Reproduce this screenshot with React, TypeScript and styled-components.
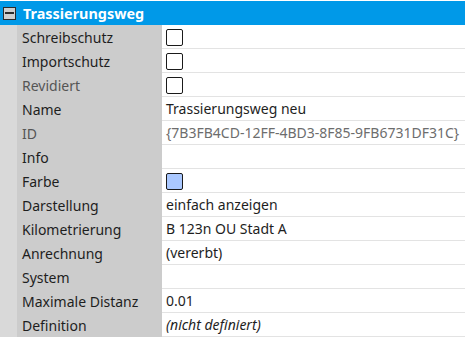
import { FC } from 'react';
import styled, { createGlobalStyle } from 'styled-components';

const GlobalStyle = createGlobalStyle`
  html, body {
    margin: 0;
    padding: 0;
    background: #ffffff;
    font-family: 'Noto Sans', 'Open Sans', sans-serif;
  }
`;

const Grid = styled.div`
  width: 465px;
  height: 337px;
  overflow: hidden;
  padding-top: 1px;
  box-sizing: border-box;
  background: #ffffff;
`;

const Header = styled.div`
  height: 24px;
  display: flex;
  align-items: center;
  background: #0099e8;
  color: #ffffff;
  font-weight: 700;
  font-size: 14.4px;
`;

const Toggle = styled.div`
  width: 11px;
  height: 11px;
  margin: 0 7px 0 3px;
  border: 1px solid #2b2b2b;
  background: #cfcfcf;
  display: flex;
  align-items: center;
  justify-content: center;

  &::after {
    content: '';
    width: 9px;
    height: 2px;
    background: #2b2b2b;
  }
`;

const Row = styled.div`
  display: grid;
  grid-template-columns: 17px 145px 1fr;
  height: 24px;
`;

const Gutter = styled.div`
  background: #d9d9d9;
`;

const Label = styled.div<{ $muted?: boolean }>`
  background: #cccccc;
  display: flex;
  align-items: center;
  padding-left: 5px;
  font-size: 14px;
  color: ${({ $muted }) => ($muted ? '#555555' : '#1e1e1e')};
  white-space: nowrap;
`;

const Value = styled.div<{ $muted?: boolean; $italic?: boolean }>`
  display: flex;
  align-items: center;
  padding-left: 4px;
  border-bottom: 1px solid #e3e3e3;
  font-size: 14px;
  color: ${({ $muted }) => ($muted ? '#6d6d6d' : '#1e1e1e')};
  font-style: ${({ $italic }) => ($italic ? 'italic' : 'normal')};
  white-space: nowrap;
  overflow: hidden;
`;

const CheckBox = styled.div<{ $fill?: string }>`
  width: 15px;
  height: 15px;
  border: 1.5px solid #1a1a1a;
  border-radius: 2px;
  background: ${({ $fill }) => $fill ?? '#ffffff'};
  margin-top: 2px;
`;

type Prop = {
  label: string;
  value?: string;
  kind?: 'text' | 'check' | 'color';
  mutedLabel?: boolean;
  mutedValue?: boolean;
  italic?: boolean;
};

const props: Prop[] = [
  { label: 'Schreibschutz', kind: 'check' },
  { label: 'Importschutz', kind: 'check' },
  { label: 'Revidiert', kind: 'check', mutedLabel: true },
  { label: 'Name', value: 'Trassierungsweg neu' },
  { label: 'ID', value: '{7B3FB4CD-12FF-4BD3-8F85-9FB6731DF31C}', mutedLabel: true, mutedValue: true },
  { label: 'Info', value: '' },
  { label: 'Farbe', kind: 'color' },
  { label: 'Darstellung', value: 'einfach anzeigen' },
  { label: 'Kilometrierung', value: 'B 123n OU Stadt A' },
  { label: 'Anrechnung', value: '(vererbt)' },
  { label: 'System', value: '' },
  { label: 'Maximale Distanz', value: '0.01' },
  { label: 'Definition', value: '(nicht definiert)', italic: true },
];

const App: FC = () => (
  <>
    <GlobalStyle />
    <Grid>
      <Header>
        <Toggle />
        Trassierungsweg
      </Header>
      {props.map((p) => (
        <Row key={p.label}>
          <Gutter />
          <Label $muted={p.mutedLabel}>{p.label}</Label>
          <Value $muted={p.mutedValue} $italic={p.italic}>
            {p.kind === 'check' && <CheckBox />}
            {p.kind === 'color' && <CheckBox $fill="#aac8ff" />}
            {(!p.kind || p.kind === 'text') && p.value}
          </Value>
        </Row>
      ))}
    </Grid>
  </>
);

export default App;
